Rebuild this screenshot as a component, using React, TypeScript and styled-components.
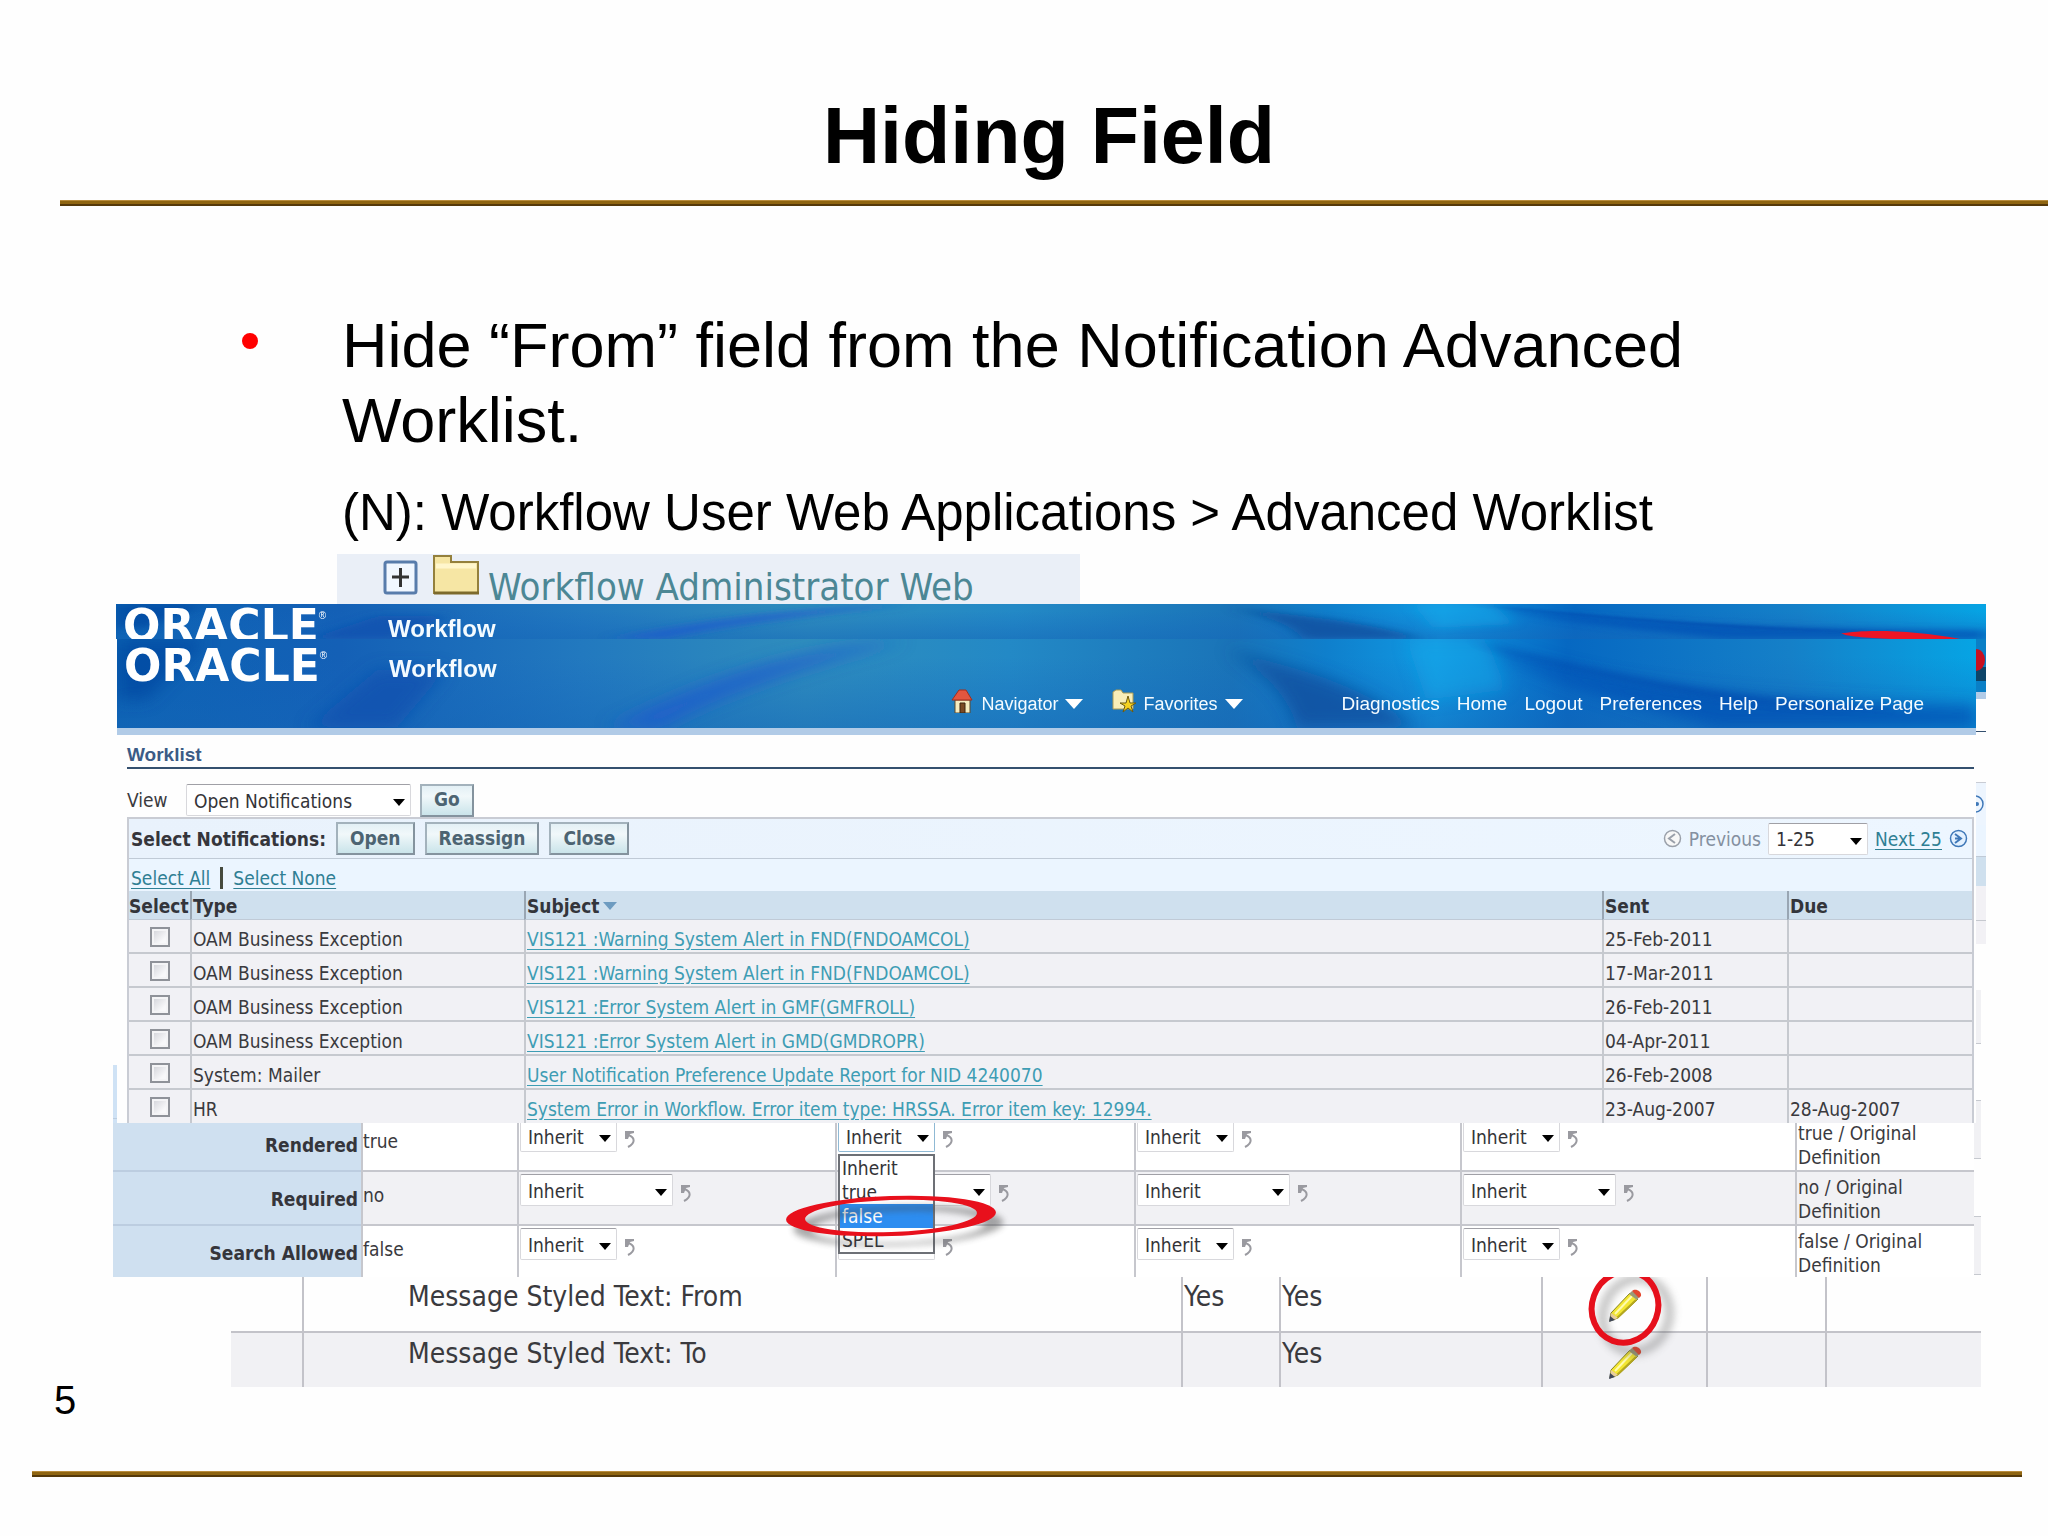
import React from "react";
import styled, { createGlobalStyle, css } from "styled-components";

const ui = `"DejaVu Sans Condensed", "Noto Sans", sans-serif`;
const sans = `"Liberation Sans", Arial, sans-serif`;

const Global = createGlobalStyle`
  *, *::before, *::after { box-sizing: border-box; }
  body { margin: 0; background: #fefefe; color: #000; font-family: ${sans}; }
`;

/* ---------- slide ---------- */

const Slide = styled.main`
  display: flex;
  flex-direction: column;
  padding: 90px 0 56px;
`;

const Title = styled.h1`
  margin: 0 0 18px;
  padding-left: 50px;
  font-size: 79px;
  line-height: 92px;
  text-align: center;
`;

const Rule = styled.hr<{ $footer?: boolean }>`
  width: auto;
  height: 6px;
  margin: ${(p) => (p.$footer ? "58px 26px 0 32px" : "0 0 0 60px")};
  border: 0;
  background: linear-gradient(#b98c3c 0 1px, #8f6511 1px 4px, #55390a 4px 6px);
`;

const Points = styled.ul`
  margin: 0;
  padding: 102px 200px 25px 240px;
  list-style: none;
`;

const Point = styled.li`
  display: grid;
  grid-template-columns: 102px 1fr;
  font-size: 63px;
  line-height: 75px;
`;

const Dot = styled.span`
  width: 16px;
  height: 16px;
  margin: 25px 0 0 2px;
  border-radius: 50%;
  background: #f00;
`;

const Path = styled.p`
  margin: 0 0 11px 342px;
  font-size: 51px;
  line-height: 60px;
`;

const Shots = styled.section`
  display: flex;
  flex-direction: column;
  margin: 0 62px 0 113px;
  font-family: ${ui};
  font-size: 19px;
  line-height: 24px;
  color: #3a3a3e;
`;

const PageNumber = styled.p`
  margin: 0 0 0 54px;
  font-size: 40px;
  line-height: 26px;
`;

/* ---------- tree strip ---------- */

const TreeStrip = styled.div`
  display: flex;
  align-items: flex-end;
  width: 743px;
  height: 50px;
  margin-left: 224px;
  padding-left: 46px;
  overflow: hidden;
  background: #eaeff7;
`;

const TreeIcons = styled.svg`
  flex: none;
  width: 105px;
  height: 50px;
`;

const TreeLink = styled.a`
  font-size: 38px;
  line-height: 34px;
  color: #4c8795;
  text-decoration: none;
`;

/* ---------- banner ---------- */

const Banner = styled.header<{ $back?: boolean }>`
  position: relative;
  display: flex;
  flex-direction: column;
  justify-content: space-between;
  overflow: hidden;
  color: #f4fbff;
  font-family: ${sans};
  ${(p) =>
    p.$back
      ? css`
          height: 35px;
          padding-top: 5px;
          margin-left: 3px;
        `
      : css`
          height: 96px;
          padding: 10px 52px 12px 0;
          border-bottom: 7px solid #b1cbe7;
        `}
`;

const Art = styled.svg`
  position: absolute;
  inset: 0;
  width: 100%;
  height: 100%;
`;

const Brand = styled.div`
  position: relative;
  display: flex;
  align-items: center;
  padding-left: 7px;
`;

const Logo = styled.span`
  width: 265px;
  font: bold 44px/32px "DejaVu Sans", sans-serif;
  color: #fff;
  sup {
    font: 10px/10px ${sans};
    vertical-align: 22px;
  }
`;

const Product = styled.span`
  padding-top: 6px;
  font-size: 24px;
  font-weight: bold;
  line-height: 28px;
`;

const Nav = styled.nav`
  position: relative;
  display: flex;
  justify-content: flex-end;
  align-items: center;
  gap: 17px;
`;

const NavMenu = styled.button<{ $last?: boolean }>`
  display: flex;
  align-items: center;
  gap: 7px;
  margin-right: ${(p) => (p.$last ? "82px" : "12px")};
  padding: 0;
  border: 0;
  background: none;
  color: inherit;
  font: 18px/24px ${sans};
  svg {
    width: 24px;
    height: 24px;
    margin: -6px 0 0;
  }
  &::after {
    content: "";
    border: 9px solid transparent;
    border-top: 10px solid #fff;
    border-bottom: 0;
  }
`;

const NavLink = styled.a`
  color: inherit;
  font-size: 19px;
  line-height: 24px;
  text-decoration: none;
`;

/* ---------- worklist ---------- */

const Stack = styled.div`
  display: grid;
  grid-template-columns: 4px 1fr 10px;
`;

const Edge = styled.div`
  display: flex;
  flex-direction: column;
  overflow: hidden;
`;

const Piece = styled.span<{ $h: number; $bg?: string; $line?: string; $narrow?: boolean }>`
  flex: none;
  width: ${(p) => (p.$narrow ? "5px" : "auto")};
  height: ${(p) => p.$h}px;
  background: ${(p) => p.$bg || "transparent"};
  border-bottom: ${(p) => (p.$line ? `1px solid ${p.$line}` : "0")};
`;

const EdgeArt = styled.svg<{ $h: number }>`
  flex: none;
  width: 10px;
  height: ${(p) => p.$h}px;
`;

const Worklist = styled.div`
  padding: 8px 2px 0 10px;
`;

const Heading = styled.h2`
  margin: 0;
  border-bottom: 2px solid #34506f;
  color: #3b5b86;
  font: bold 19px/24px ${sans};
`;

const ViewRow = styled.div`
  display: flex;
  align-items: center;
  padding-top: 14px;
  height: 48px;
`;

const ViewLabel = styled.label`
  width: 59px;
`;

const SelectBox = styled.span<{ $w: number; $gap?: number; $active?: boolean }>`
  position: relative;
  display: inline-flex;
  flex: none;
  width: ${(p) => p.$w}px;
  margin-right: ${(p) => p.$gap || 0}px;
  select {
    width: 100%;
    height: 32px;
    padding: 1px 22px 0 7px;
    border: 1px solid ${(p) => (p.$active ? "#8fb9d4" : "#d8d8dc")};
    border-top-color: #a0a0a6;
    border-radius: 2px;
    background: #fff;
    color: #333338;
    font: 19px/24px ${ui};
    appearance: none;
  }
  &::after {
    content: "";
    position: absolute;
    top: 15px;
    right: 6px;
    border: 6px solid transparent;
    border-top: 7px solid #000;
    border-bottom: 0;
    pointer-events: none;
  }
`;

const Push = styled.button`
  height: 33px;
  padding: 0 12px 2px;
  border: 2px solid;
  border-color: #a3b2bc #84939e #84939e #a3b2bc;
  background: linear-gradient(#e3f0f5, #f1f8fa 35%, #cae4ea);
  color: #4d6472;
  font: bold 19px/24px ${ui};
`;

const Panel = styled.div`
  border: 2px solid #c9ccd4;
  border-bottom: 0;
`;

const Actions = styled.div`
  display: flex;
  align-items: center;
  gap: 10px;
  height: 40px;
  padding: 0 4px 0 2px;
  border-bottom: 1px solid #c0cad6;
  background: linear-gradient(90deg, #e9f2fc, #edf6ff);
`;

const ActionLabel = styled.strong`
  color: #35353b;
`;

const Pager = styled.div`
  display: flex;
  align-items: center;
  gap: 7px;
  margin-left: auto;
  color: #8490a0;
  svg {
    width: 19px;
    height: 19px;
  }
`;

const TextLink = styled.a<{ $light?: boolean }>`
  color: ${(p) => (p.$light ? "#3e9db4" : "#2f7f94")};
  text-decoration: underline;
  text-underline-offset: 3px;
`;

const Selection = styled.div`
  display: flex;
  align-items: center;
  gap: 10px;
  height: 32px;
  padding: 5px 2px 0;
  background: #ebf5ff;
`;

const Bar = styled.span`
  width: 3px;
  height: 22px;
  background: #454a3e;
`;

const Grid = styled.table`
  width: 100%;
  table-layout: fixed;
  border-collapse: separate;
  border-spacing: 0;
  th,
  td {
    padding: 2px 0 0 1px;
    border-left: 2px solid #c6c9cf;
    text-align: left;
    white-space: nowrap;
  }
  th:first-child,
  td:first-child {
    padding-left: 0;
    border-left: 0;
  }
  th {
    height: 29px;
    border-bottom: 1px solid #c0cad6;
    border-left-color: #99a6b3;
    background: #cfe0ee;
    color: #33353b;
  }
  td {
    height: 34px;
    padding-top: 5px;
    border-bottom: 2px solid #c6c9cf;
    background: #f1f1f5;
  }
  tr:last-child td {
    height: 33px;
    border-bottom: 0;
  }
`;

const SortMark = styled.span`
  display: inline-block;
  margin: 0 0 3px 4px;
  border: 7px solid transparent;
  border-top: 8px solid #6d9bc0;
  border-bottom: 0;
`;

const Check = styled.input`
  display: block;
  width: 20px;
  height: 20px;
  margin: -4px auto 0;
  border: 2px solid #8f9299;
  background: linear-gradient(135deg, #cfd0d6, #f8f8fa 70%);
  box-shadow: inset 0 0 0 2px #f4f4f6;
  appearance: none;
`;

/* ---------- properties ---------- */

const PropsWindow = styled.div`
  display: grid;
  grid-template-columns: 1fr 7px;
  margin-right: 5px;
  height: 153px;
`;

const Crop = styled.div`
  display: flex;
  align-items: flex-start;
  min-width: 0;
`;

const PropGrid = styled.table`
  width: 100%;
  margin-top: -5px;
  clip-path: inset(5px 0 -20px 0);
  table-layout: fixed;
  border-collapse: separate;
  border-spacing: 0;
  background: #fff;
  th,
  td {
    height: 54px;
    padding: 2px 0 0 1px;
    border-left: 2px solid #c6c7cd;
    border-bottom: 2px solid #c6c7cd;
    text-align: left;
    vertical-align: top;
  }
  tr:nth-child(2) td {
    background: #f1f1f4;
  }
  th {
    padding: 15px 3px 0 0;
    border-left: 0;
    background: #cfe0f0;
    border-bottom-color: #bccde0;
    text-align: right;
    color: #35353b;
  }
  td:nth-child(2) {
    padding: 11px 0 0;
  }
  td:last-child {
    padding-top: 3px;
  }
  tr:last-child th,
  tr:last-child td {
    height: 50px;
    border-bottom: 0;
  }
`;

const Field = styled.div`
  position: relative;
  display: flex;
  align-items: center;
  gap: 7px;
  > svg {
    width: 12px;
    height: 18px;
    margin-top: 6px;
  }
`;

const Menu = styled.ul`
  position: absolute;
  z-index: 2;
  top: 34px;
  left: 0;
  width: 97px;
  margin: 0;
  padding: 0;
  border: 2px solid #6d7076;
  background: #fff;
  list-style: none;
`;

const Option = styled.li<{ $on?: boolean }>`
  height: 24px;
  padding-left: 2px;
  background: ${(p) => (p.$on ? "#2d8df0" : "#fff")};
  color: ${(p) => (p.$on ? "#fff" : "#333338")};
`;

const Ring = styled.svg`
  && {
    position: absolute;
    z-index: 3;
    top: 64px;
    left: -60px;
    width: 240px;
    height: 68px;
    margin: 0;
    pointer-events: none;
  }
`;

/* ---------- message rows ---------- */

const Messages = styled.table`
  width: auto;
  margin: 0 5px 0 118px;
  table-layout: fixed;
  border-collapse: separate;
  border-spacing: 0;
  font-size: 28px;
  line-height: 30px;
  td {
    height: 54px;
    padding: 0 0 12px 1px;
    border-left: 2px solid #c3c3c9;
  }
  td:first-child {
    border-left: 0;
  }
  td:nth-child(2) {
    padding-left: 104px;
  }
  tr:first-child td {
    height: 57px;
    padding-bottom: 14px;
    border-bottom: 2px solid #c3c3c9;
  }
  tr:last-child td {
    background: #f1f1f4;
  }
`;

const MessagesFrame = styled.div`
  display: grid;
`;

const Edit = styled.button`
  position: relative;
  display: block;
  width: 36px;
  height: 34px;
  margin: 8px auto -8px;
  padding: 0;
  border: 0;
  background: none;
  > svg:first-child {
    display: block;
    width: 36px;
    height: 34px;
  }
`;

const Circle = styled.svg`
  position: absolute;
  z-index: 1;
  top: -11px;
  left: -22px;
  width: 100px;
  height: 90px;
  pointer-events: none;
`;

/* ---------- drawings ---------- */

function BannerArt({ id, back }: { id: string; back?: boolean }) {
  return (
    <Art viewBox="0 0 1860 88" preserveAspectRatio="none" aria-hidden="true">
      <defs>
        <linearGradient id={`${id}g`}>
          <stop offset="0" stopColor="#0b62b2" />
          <stop offset=".12" stopColor="#1460b6" />
          <stop offset=".25" stopColor="#2279bf" />
          <stop offset=".37" stopColor="#2f8dbd" />
          <stop offset=".48" stopColor="#2389c6" />
          <stop offset=".6" stopColor="#1a74b8" />
          <stop offset=".65" stopColor="#0f7fcc" />
          <stop offset=".71" stopColor="#1199e2" />
          <stop offset=".78" stopColor="#0668c2" />
          <stop offset=".9" stopColor="#1580c8" />
          <stop offset="1" stopColor="#06a4e4" />
        </linearGradient>
        <linearGradient id={`${id}v`} x2="0" y2="1">
          <stop offset=".2" stopColor="#1565bf" stopOpacity="0" />
          <stop offset="1" stopColor="#1566b8" stopOpacity=".5" />
        </linearGradient>
        <filter id={`${id}b`} x="-20%" y="-60%" width="140%" height="220%">
          <feGaussianBlur stdDeviation="8" />
        </filter>
        <filter id={`${id}s`} x="-20%" y="-60%" width="140%" height="220%">
          <feGaussianBlur stdDeviation="3" />
        </filter>
      </defs>
      <rect width="1860" height="88" fill={`url(#${id}g)`} />
      <rect width="1860" height="88" fill={`url(#${id}v)`} />
      <g filter={`url(#${id}b)`}>
        <path d="M0 0H90L30 60H0Z" fill="#0646a0" opacity=".7" />
        <path d="M190 88L260 30H330L280 88Z" fill="#0c4fae" opacity=".7" />
        <path d="M490 88C570 50 660 10 790 2C690 26 600 56 545 88Z" fill="#1f5ccc" opacity=".8" />
        <path d="M1110 10C1180 30 1240 40 1300 88H1180C1170 50 1140 30 1110 10Z" fill="#0b4a98" opacity=".7" />
        <path d="M1290 0H1370L1390 50L1310 60Z" fill="#18a8ea" opacity=".5" />
        <path d="M1360 0C1480 50 1640 60 1860 66V88H1600C1500 60 1420 40 1360 0Z" fill="#0350b4" opacity=".75" />
      </g>
      <path
        d="M1350 2C1480 30 1600 60 1780 70C1640 74 1500 44 1350 2Z"
        fill="#0248ae"
        opacity=".6"
        filter={`url(#${id}s)`}
      />
      {back && <path d="M1716 74C1740 63 1790 66 1834 88H1770C1745 86 1722 82 1716 74Z" fill="#ee1525" />}
    </Art>
  );
}

const Undo = () => (
  <svg viewBox="0 0 12 18" aria-hidden="true">
    <path d="M1 1H10V3L6 4L4 9H1Z" fill="#9a9aa0" />
    <path d="M4 5C11 7 12 13 4 17" fill="none" stroke="#9a9aa0" strokeWidth="2" />
  </svg>
);

const Pencil = () => (
  <svg viewBox="0 0 36 34" aria-hidden="true">
    <path d="M3 33L4 25L23 5L31 11L11 30Z" fill="#f3e733" stroke="#8a8420" strokeWidth="1" />
    <path d="M8 26L25 8" stroke="#fffbb0" strokeWidth="2" />
    <path d="M10 30L29 12" stroke="#b5a81e" strokeWidth="2" />
    <path d="M4 25L11 30L3 33Z" fill="#e9cf9c" />
    <path d="M3 28L8 32L2 34Z" fill="#3f4658" />
    <path d="M22 6L25 3L33 8L30 12Z" fill="#9a9a78" />
    <path d="M25 3C28 0 35 3 34 8L32 10Z" fill="#e4472e" />
  </svg>
);

const House = () => (
  <svg viewBox="0 0 24 24" aria-hidden="true">
    <path d="M5 11H20V24H5Z" fill="#f6ecc0" stroke="#5d4a2c" />
    <path d="M2 11L9 1H16L22 11Z" fill="#e2563f" stroke="#a32c1c" />
    <path d="M10 14H15V24H10Z" fill="#7a4a24" stroke="#3c240f" />
  </svg>
);

const FavFolder = () => (
  <svg viewBox="0 0 24 24" aria-hidden="true">
    <path d="M1 3L4 1H9L11 4H21V20H1Z" fill="#f7eeb8" stroke="#a99b55" />
    <path d="M16 7L18 14H24L19 17L21 23L16 19L11 23L13 17L8 14H14Z" fill="#f5d21f" stroke="#6d5a10" />
  </svg>
);

const Step = ({ next }: { next?: boolean }) => (
  <svg viewBox="0 0 19 19" fill="none" stroke={next ? "#3f78b8" : "#9aa0aa"} aria-hidden="true">
    <circle cx="9.5" cy="9.5" r="8" fill={next ? "#e3f1ff" : "#f7f7f7"} strokeWidth="1.5" />
    <path d={next ? "M6 5L12 9.5L6 14M6 9.5H11" : "M12 5L6 9.5L12 14"} strokeWidth="2" />
  </svg>
);

function BrandLine() {
  return (
    <Brand>
      <Logo>
        ORACLE<sup>®</sup>
      </Logo>
      <Product>Workflow</Product>
    </Brand>
  );
}

/* ---------- data ---------- */

const notifications = [
  ["OAM Business Exception", "VIS121 :Warning System Alert in FND(FNDOAMCOL)", "25-Feb-2011", ""],
  ["OAM Business Exception", "VIS121 :Warning System Alert in FND(FNDOAMCOL)", "17-Mar-2011", ""],
  ["OAM Business Exception", "VIS121 :Error System Alert in GMF(GMFROLL)", "26-Feb-2011", ""],
  ["OAM Business Exception", "VIS121 :Error System Alert in GMD(GMDROPR)", "04-Apr-2011", ""],
  ["System: Mailer", "User Notification Preference Update Report for NID 4240070", "26-Feb-2008", ""],
  ["HR", "System Error in Workflow. Error item type: HRSSA. Error item key: 12994.", "23-Aug-2007", "28-Aug-2007"],
];

const properties = [
  { name: "Rendered", value: "true", wide: false },
  { name: "Required", value: "no", wide: true },
  { name: "Search Allowed", value: "false", wide: false },
];

const messages = [
  { name: "Message Styled Text: From", shown: "Yes", circled: true },
  { name: "Message Styled Text: To", shown: "", circled: false },
];

const links = ["Diagnostics", "Home", "Logout", "Preferences", "Help", "Personalize Page"];
const levels = [0, 1, 2, 3];

export default function App() {
  return (
    <Slide>
      <Global />
      <Title>Hiding Field</Title>
      <Rule />
      <Points>
        <Point>
          <Dot />
          <span>Hide “From” field from the Notification Advanced Worklist.</span>
        </Point>
      </Points>
      <Path>(N): Workflow User Web Applications &gt; Advanced Worklist</Path>

      <Shots>
        <TreeStrip>
          <TreeIcons viewBox="0 0 105 50" aria-hidden="true">
            <rect x="2" y="8" width="31" height="31" rx="2" fill="#f1f7ff" stroke="#587cab" strokeWidth="3" />
            <path d="M9 23H26M17.500 14V33" stroke="#333" strokeWidth="3" />
            <path d="M51 2H68V8H95V39H51Z" fill="#f6e6a4" stroke="#94803c" strokeWidth="2" />
            <path d="M53 12H93" stroke="#fff6cc" strokeWidth="5" />
            <path d="M51 39H96" stroke="#7d6a2c" strokeWidth="3" />
          </TreeIcons>
          <TreeLink href="#admin">Workflow Administrator Web</TreeLink>
        </TreeStrip>

        <Banner $back>
          <BannerArt id="a" back />
          <BrandLine />
        </Banner>

        <Stack>
          <Edge>
            <Piece $h={426} />
            <Piece $h={54} $bg="#cfe2f5" $line="#bccde0" />
            <Piece $h={4} $bg="#cfe2f5" />
          </Edge>
          <div>
            <Banner>
              <BannerArt id="b" />
              <BrandLine />
              <Nav>
                <NavMenu>
                  <House />
                  Navigator
                </NavMenu>
                <NavMenu $last>
                  <FavFolder />
                  Favorites
                </NavMenu>
                {links.map((l) => (
                  <NavLink key={l} href={`#${l}`}>
                    {l}
                  </NavLink>
                ))}
              </Nav>
            </Banner>
            <Worklist>
              <Heading>Worklist</Heading>
              <ViewRow>
                <ViewLabel htmlFor="view">View</ViewLabel>
                <SelectBox $w={225} $gap={9}>
                  <select id="view">
                    <option>Open Notifications</option>
                  </select>
                </SelectBox>
                <Push>Go</Push>
              </ViewRow>
              <Panel>
                <Actions>
                  <ActionLabel>Select Notifications:</ActionLabel>
                  <Push>Open</Push>
                  <Push>Reassign</Push>
                  <Push>Close</Push>
                  <Pager>
                    <Step />
                    <span>Previous</span>
                    <SelectBox $w={100}>
                      <select aria-label="Rows shown">
                        <option>1-25</option>
                      </select>
                    </SelectBox>
                    <TextLink href="#next">Next 25</TextLink>
                    <Step next />
                  </Pager>
                </Actions>
                <Selection>
                  <TextLink href="#all">Select All</TextLink>
                  <Bar />
                  <TextLink href="#none">Select None</TextLink>
                </Selection>
                <Grid>
                  <colgroup>
                    <col style={{ width: 61 }} />
                    <col style={{ width: 334 }} />
                    <col />
                    <col style={{ width: 185 }} />
                    <col style={{ width: 185 }} />
                  </colgroup>
                  <thead>
                    <tr>
                      <th>Select</th>
                      <th>Type</th>
                      <th>
                        Subject
                        <SortMark />
                      </th>
                      <th>Sent</th>
                      <th>Due</th>
                    </tr>
                  </thead>
                  <tbody>
                    {notifications.map(([type, subject, sent, due], i) => (
                      <tr key={i}>
                        <td>
                          <Check type="checkbox" aria-label={`Select row ${i + 1}`} />
                        </td>
                        <td>{type}</td>
                        <td>
                          <TextLink $light href={`#n${i}`}>
                            {subject}
                          </TextLink>
                        </td>
                        <td>{sent}</td>
                        <td>{due}</td>
                      </tr>
                    ))}
                  </tbody>
                </Grid>
              </Panel>
            </Worklist>
          </div>
          <Edge>
            <EdgeArt $h={53} viewBox="0 0 10 53" aria-hidden="true">
              <rect width="10" height="53" fill="#0a7fc6" />
              <rect y="28" width="10" height="14" fill="#0d4468" />
              <ellipse cx="0" cy="21" rx="9" ry="11" fill="#c81020" />
            </EdgeArt>
            <Piece $h={7} $bg="#b1cbe7" />
            <Piece $h={33} $line="#34506f" />
            <Piece $h={51} $line="#c9ccd4" />
            <EdgeArt $h={42} viewBox="0 0 10 42" aria-hidden="true">
              <rect width="10" height="42" fill="#edf5fe" />
              <circle cx="-1" cy="21" r="8" fill="none" stroke="#3f78b8" strokeWidth="1.500" />
              <circle cx="1" cy="21" r="2" fill="#3f78b8" />
            </EdgeArt>
            <Piece $h={32} $bg="#ebf5ff" $line="#c0cad6" />
            <Piece $h={29} $bg="#cfe0ee" />
            <Piece $h={35} $bg="#f2f1f5" $line="#c6c9cf" />
            <Piece $h={23} $bg="#f2f1f5" />
            <Piece $h={46} />
            <Piece $narrow $h={54} $bg="#f1f1f4" $line="#c6c9cf" />
            <Piece $narrow $h={57} $line="#c6c9cf" />
            <Piece $narrow $h={22} $bg="#f1f1f4" />
          </Edge>
        </Stack>

        <PropsWindow>
          <Crop>
            <PropGrid>
              <colgroup>
                <col style={{ width: 248 }} />
                <col style={{ width: 156 }} />
                <col style={{ width: 318 }} />
                <col style={{ width: 299 }} />
                <col style={{ width: 326 }} />
                <col />
                <col style={{ width: 179 }} />
              </colgroup>
              <tbody>
                {properties.map((p, r) => (
                  <tr key={p.name}>
                    <th scope="row">{p.name}</th>
                    <td>{p.value}</td>
                    {levels.map((c) => (
                      <td key={c}>
                        <Field>
                          <SelectBox $w={p.wide ? 153 : 97} $active={r === 0 && c === 1}>
                            <select aria-label={`${p.name} level ${c + 1}`}>
                              <option>Inherit</option>
                            </select>
                          </SelectBox>
                          <Undo />
                          {r === 0 && c === 1 && (
                            <>
                              <Menu>
                                <Option>Inherit</Option>
                                <Option>true</Option>
                                <Option $on>false</Option>
                                <Option>SPEL</Option>
                              </Menu>
                              <Ring viewBox="0 0 240 68" aria-hidden="true">
                                <defs>
                                  <filter id="ringShadow" x="-10%" y="-30%" width="120%" height="160%">
                                    <feGaussianBlur stdDeviation="3" />
                                  </filter>
                                </defs>
                                <g fillRule="evenodd" transform="rotate(-2 113 32)">
                                  <path
                                    d="M15 42a105 20 0 1 0 210 0a105 20 0 1 0 -210 0ZM34 43a86 16 0 1 1 172 0a86 16 0 1 1 -172 0Z"
                                    fill="#444"
                                    opacity=".45"
                                    filter="url(#ringShadow)"
                                  />
                                  <path
                                    d="M8 32a105 20 0 1 0 210 0a105 20 0 1 0 -210 0ZM27 32a86 16 0 1 1 172 0a86 16 0 1 1 -172 0Z"
                                    fill="#e8101c"
                                  />
                                </g>
                              </Ring>
                            </>
                          )}
                        </Field>
                      </td>
                    ))}
                    <td>
                      {p.value} / Original
                      <br />
                      Definition
                    </td>
                  </tr>
                ))}
              </tbody>
            </PropGrid>
          </Crop>
          <Edge>
            <Piece $h={36} $bg="#f1f1f4" $line="#c6c9cf" />
            <Piece $h={58} $line="#c6c9cf" />
            <Piece $h={58} $bg="#f1f1f4" $line="#c6c9cf" />
          </Edge>
        </PropsWindow>

        <MessagesFrame>
          <Messages>
            <colgroup>
              <col style={{ width: 71 }} />
              <col />
              <col style={{ width: 98 }} />
              <col style={{ width: 262 }} />
              <col style={{ width: 165 }} />
              <col style={{ width: 119 }} />
              <col style={{ width: 156 }} />
            </colgroup>
            <tbody>
              {messages.map((m) => (
                <tr key={m.name}>
                  <td />
                  <td>{m.name}</td>
                  <td>{m.shown}</td>
                  <td>Yes</td>
                  <td>
                    <Edit aria-label={`Edit ${m.name}`}>
                      <Pencil />
                      {m.circled && (
                        <Circle viewBox="0 0 100 90" aria-hidden="true">
                          <defs>
                            <filter id="circleShadow" x="-20%" y="-20%" width="140%" height="140%">
                              <feGaussianBlur stdDeviation="4" />
                            </filter>
                          </defs>
                          <ellipse
                            cx="51"
                            cy="38"
                            rx="33"
                            ry="37"
                            transform="rotate(20 51 38)"
                            fill="none"
                            stroke="#555"
                            strokeWidth="8"
                            opacity=".4"
                            filter="url(#circleShadow)"
                          />
                          <ellipse
                            cx="40"
                            cy="30"
                            rx="33"
                            ry="36"
                            transform="rotate(20 40 30)"
                            fill="none"
                            stroke="#e6101c"
                            strokeWidth="6"
                          />
                        </Circle>
                      )}
                    </Edit>
                  </td>
                  <td />
                  <td />
                </tr>
              ))}
            </tbody>
          </Messages>
        </MessagesFrame>
      </Shots>

      <PageNumber>5</PageNumber>
      <Rule $footer />
    </Slide>
  );
}
